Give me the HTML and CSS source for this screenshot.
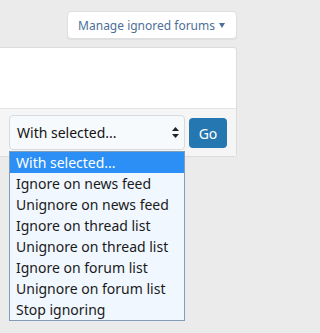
FILE: index.html
```html
<!DOCTYPE html>
<html>
<head>
<meta charset="utf-8">
<link rel="stylesheet" href="styles.css">
</head>
<body>
<div class="page">
  <div class="top-bar">
    <button class="menu-btn">Manage ignored forums<span class="caret"></span></button>
  </div>
  <div class="block">
    <div class="block-body"></div>
    <div class="block-footer">
      <div class="select-wrap">
        <div class="select">
          <span>With selected...</span>
          <svg class="arrows" width="7" height="11" viewBox="0 0 7 11"><path d="M3.5 0 L7 4 L0 4 Z M0 7 L7 7 L3.5 11 Z" fill="#222"/></svg>
        </div>
        <ul class="options">
          <li class="active">With selected...</li>
          <li>Ignore on news feed</li>
          <li>Unignore on news feed</li>
          <li>Ignore on thread list</li>
          <li>Unignore on thread list</li>
          <li>Ignore on forum list</li>
          <li>Unignore on forum list</li>
          <li>Stop ignoring</li>
        </ul>
      </div>
      <button class="go-btn">Go</button>
    </div>
  </div>
</div>
</body>
</html>
```
FILE: styles.css
```css
html, body {
  margin: 0;
  padding: 0;
  background: #ebebeb;
}
body {
  font-family: "Noto Sans", "Open Sans", sans-serif;
}
.page {
  width: 242px;
  height: 333px;
  overflow: hidden;
}
.top-bar {
  display: flex;
  justify-content: flex-end;
  padding: 11px 5px 0 0;
}
.menu-btn {
  height: 28px;
  background: #fff;
  border: 1px solid #e0e0e0;
  border-radius: 4px;
  box-shadow: 0 1px 1px rgba(0,0,0,0.06);
  color: #4d6f97;
  font-family: inherit;
  font-size: 12px;
  padding: 0 11px 0 10px;
  display: flex;
  align-items: center;
  gap: 4px;
  cursor: pointer;
}
.caret {
  display: inline-block;
  width: 0;
  height: 0;
  border-left: 3.5px solid transparent;
  border-right: 3.5px solid transparent;
  border-top: 5px solid #4d6f97;
}
.block {
  margin: 8px 5px 0 -1px;
  border: 1px solid #dcdcdc;
  border-radius: 0 3px 3px 0;
  background: #fff;
}
.block-body {
  height: 60px;
}
.block-footer {
  background: #f5f5f5;
  border-top: 1px solid #e3e3e3;
  height: 48px;
  display: flex;
  align-items: flex-start;
  gap: 4px;
  padding-left: 9px;
  box-sizing: border-box;
}
.select-wrap {
  position: relative;
  margin-top: 6px;
}
.select {
  width: 176px;
  height: 35px;
  box-sizing: border-box;
  border: 1px solid #d6dbe0;
  border-radius: 4px;
  background: #f7fafd;
  display: flex;
  align-items: center;
  justify-content: space-between;
  padding: 0 5px 0 7px;
  font-size: 14px;
  color: #141414;
}
.arrows {
  display: block;
}
.options {
  position: absolute;
  top: 36px;
  left: 0;
  width: 176px;
  box-sizing: border-box;
  margin: 0;
  padding: 0;
  list-style: none;
  border: 1px solid #7f9db9;
  background: #f0f7ff;
  font-size: 14px;
  color: #1a1a1a;
}
.options li {
  height: 21px;
  line-height: 21px;
  padding-left: 6px;
  white-space: nowrap;
}
.options li.active {
  background: #2b8ff6;
  color: #fff;
}
.go-btn {
  margin-top: 9px;
  width: 38px;
  height: 30px;
  border: none;
  border-radius: 4px;
  background: #2577b1;
  color: #fff;
  font-family: inherit;
  font-size: 14px;
  padding: 0;
  cursor: pointer;
}
```
